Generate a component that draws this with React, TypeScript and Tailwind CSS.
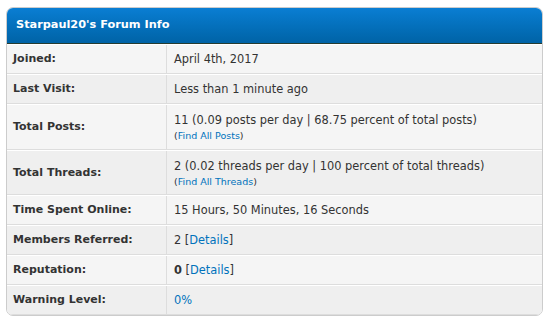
import React from "react";

const link = "text-[#0072bc]";

type Row = { label: string; value: React.ReactNode; alt: boolean; pad?: string };

const rows: Row[] = [
  { label: "Joined:", value: "April 4th, 2017", alt: false },
  { label: "Last Visit:", value: "Less than 1 minute ago", alt: true },
  {
    label: "Total Posts:",
    value: (
      <>
        <div>11 (0.09 posts per day | 68.75 percent of total posts)</div>
        <div className="text-[9.5px] leading-[16px]">
          (<a className={link}>Find All Posts</a>)
        </div>
      </>
    ),
    alt: false,
    pad: "pt-[7px] pb-[5px]",
  },
  {
    label: "Total Threads:",
    value: (
      <>
        <div>2 (0.02 threads per day | 100 percent of total threads)</div>
        <div className="text-[9.5px] leading-[16px]">
          (<a className={link}>Find All Threads</a>)
        </div>
      </>
    ),
    alt: true,
    pad: "pt-[7px] pb-[4px]",
  },
  { label: "Time Spent Online:", value: "15 Hours, 50 Minutes, 16 Seconds", alt: false },
  {
    label: "Members Referred:",
    value: (
      <>
        2 [<a className={link}>Details</a>]
      </>
    ),
    alt: true,
  },
  {
    label: "Reputation:",
    value: (
      <>
        <strong className="font-bold">0</strong> [<a className={link}>Details</a>]
      </>
    ),
    alt: false,
  },
  {
    label: "Warning Level:",
    value: <a className={link}>0%</a>,
    alt: true,
  },
];

export default function App() {
  return (
    <div className="w-[549px] h-[327px] bg-white pt-[7px] pl-[6px] font-['DejaVu_Sans',sans-serif] text-[11.4px] text-[#333]">
      <div className="w-[537px] border border-[#cccccc] rounded-[7px] overflow-hidden bg-white">
        <div className="h-[36px] pl-[9px] flex items-center text-white font-bold text-[11.3px] bg-gradient-to-b from-[#0a7ed3] to-[#0063a6] border-b border-[#263c30]">
          Starpaul20's Forum Info
        </div>
        {rows.map((r, i) => (
          <div
            key={i}
            className={`flex ${r.alt ? "bg-[#efefef]" : "bg-[#f5f5f5]"} border-t border-white border-b border-b-[#dddddd]`}
          >
            <div className="w-[160px] shrink-0 px-[6px] py-[6px] font-bold text-[11px] leading-[16px] flex items-center border-r border-[#dddddd]">
              {r.label}
            </div>
            <div className={`flex-1 px-[7px] leading-[16px] ${r.pad ?? "py-[6px]"}`}>{r.value}</div>
          </div>
        ))}
      </div>
    </div>
  );
}
